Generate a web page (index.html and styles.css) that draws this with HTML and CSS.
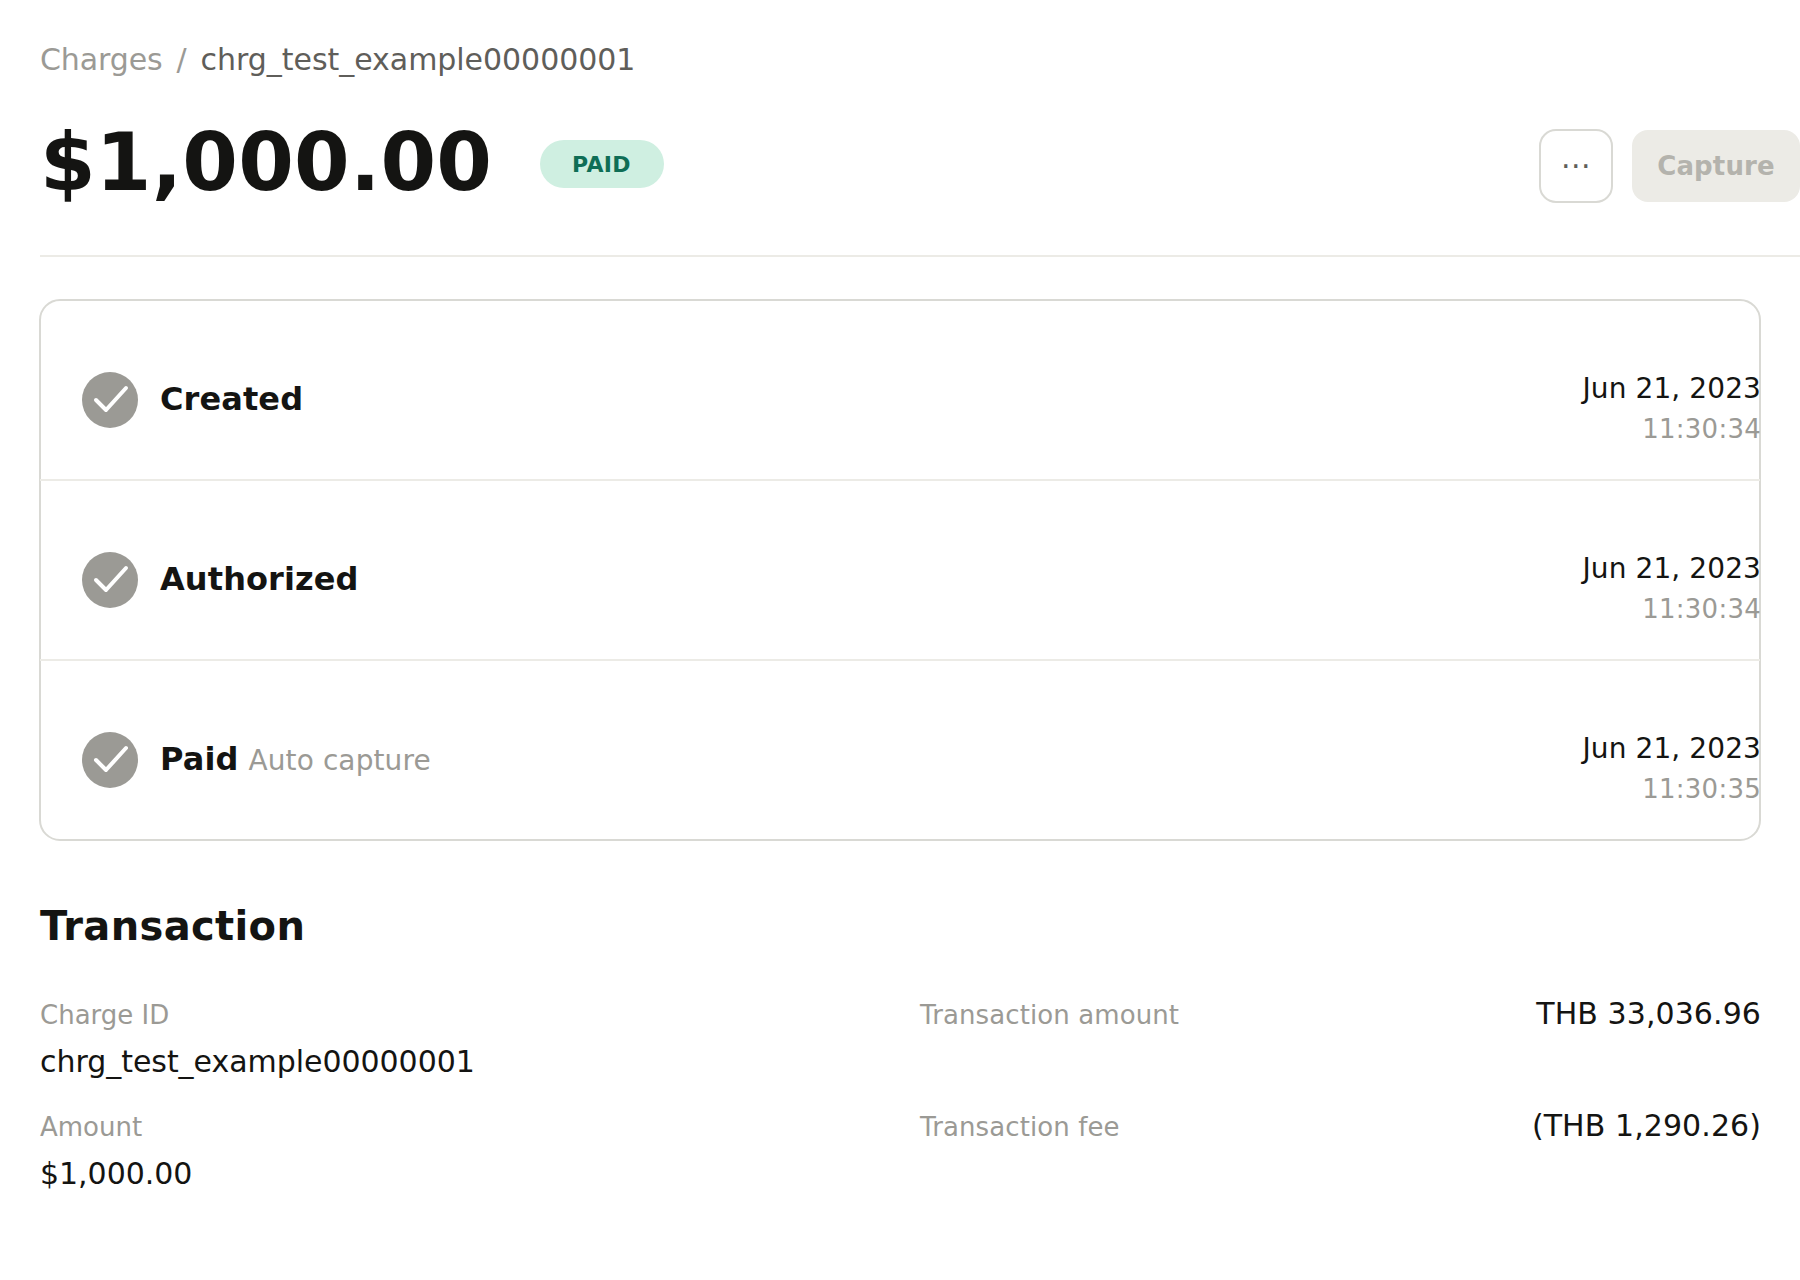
FILE: index.html
```
<!DOCTYPE html>
<html lang="en">
<head>
  <meta charset="UTF-8">
  <title>Charge</title>
  <link rel="stylesheet" href="styles.css">
</head>
<body>

<div class="page">
  <nav class="breadcrumb">
    <a class="crumb">Charges</a>
    <span class="crumb">/</span>
    <span class="crumb current">chrg_test_example00000001</span>
  </nav>

  <header class="header">
    <h1 class="amount">$1,000.00</h1>
    <span class="badge">PAID</span>
    <div class="actions">
      <button class="btn more">···</button>
      <button class="btn capture" disabled>Capture</button>
    </div>
  </header>

  <div class="timeline">
    <div class="event">
      <svg class="check" viewBox="0 0 56 56">
        <circle cx="28" cy="28" r="28"/>
        <path d="M14 28 L24 38 L44 16"/>
      </svg>
      <div class="event-name">Created</div>
      <div class="event-time">
        <div class="date">Jun 21, 2023</div>
        <div class="time">11:30:34</div>
      </div>
    </div>
    <div class="event">
      <svg class="check" viewBox="0 0 56 56">
        <circle cx="28" cy="28" r="28"/>
        <path d="M14 28 L24 38 L44 16"/>
      </svg>
      <div class="event-name">Authorized</div>
      <div class="event-time">
        <div class="date">Jun 21, 2023</div>
        <div class="time">11:30:34</div>
      </div>
    </div>
    <div class="event">
      <svg class="check" viewBox="0 0 56 56">
        <circle cx="28" cy="28" r="28"/>
        <path d="M14 28 L24 38 L44 16"/>
      </svg>
      <div class="event-name">Paid<span class="note">Auto capture</span></div>
      <div class="event-time">
        <div class="date">Jun 21, 2023</div>
        <div class="time">11:30:35</div>
      </div>
    </div>
  </div>

  <h2 class="section-title">Transaction</h2>
  <div class="details">
    <div class="fields">
      <div class="field">
        <div class="label">Charge ID</div>
        <div class="value">chrg_test_example00000001</div>
      </div>
      <div class="field">
        <div class="label">Amount</div>
        <div class="value">$1,000.00</div>
      </div>
    </div>
    <div class="totals">
      <div class="total">
        <span class="label">Transaction amount</span>
        <span class="value">THB 33,036.96</span>
      </div>
      <div class="total">
        <span class="label">Transaction fee</span>
        <span class="value">(THB 1,290.26)</span>
      </div>
    </div>
  </div>
</div>

</body>
</html>
```
FILE: styles.css
```
* {
  box-sizing: border-box;
}
body {
  margin: 0;
  font-family: 'DejaVu Sans', sans-serif;
  background-color: #fff;
  color: #141412;
  overflow: hidden;
}
.page {
  padding: 42px 0 0 40px;
}
.breadcrumb {
  display: flex;
  gap: 14px;
  font-size: 30px;
  line-height: 35px;
}
.crumb {
  color: #9b9a95;
  letter-spacing: -0.1px;
}
.crumb.current {
  color: #5f5e5a;
  letter-spacing: -0.04px;
}

.header {
  display: flex;
  align-items: flex-start;
  padding: 39px 0 46px;
  border-bottom: 2px solid #ecebe6;
}
.amount {
  width: 452px;
  margin: 0;
  font-size: 80px;
  line-height: 93px;
  font-weight: bold;
  letter-spacing: 0.2px;
}
.badge {
  width: 124px;
  height: 48px;
  margin: 24px 0 0 48px;
  padding: 12px 1px 0 0;
  border-radius: 24px;
  background-color: #cfefe1;
  color: #0f6e56;
  font-size: 22px;
  line-height: 25px;
  font-weight: bold;
  letter-spacing: 0.3px;
  text-align: center;
}
.actions {
  display: flex;
  align-items: center;
  gap: 19px;
  margin: 14px 0 0 auto;
}
.btn {
  padding: 0;
  font-family: inherit;
  border-radius: 16px;
}
.more {
  width: 74px;
  height: 74px;
  margin: -1px 0;
  border: 2px solid #d9d9d4;
  border-radius: 17px;
  background-color: #fff;
  color: #5f5e5a;
  font-size: 30px;
  line-height: 35px;
  letter-spacing: 0.4px;
}
.capture {
  width: 168px;
  height: 72px;
  border: none;
  background-color: #ecebe6;
  color: #b4b3ad;
  font-size: 26px;
  line-height: 30px;
  font-weight: bold;
  letter-spacing: 0.15px;
}

.timeline {
  width: 1722px;
  height: 542px;
  margin: 42px 0 0 -1px;
  border: 2px solid #d9d9d4;
  border-radius: 21px;
}
/* rows run halfway over the card border */
.event {
  display: flex;
  align-items: flex-start;
  height: 180px;
  margin: 0 -1px;
  padding: 71px 0 0 42px;
  border-bottom: 2px solid #ecebe6;
}
.event:last-child {
  height: 178px;
  border-bottom: none;
}
.check {
  width: 56px;
  height: 56px;
}
.check circle {
  fill: #9b9a95;
}
.check path {
  fill: none;
  stroke: #fff;
  stroke-width: 4;
  stroke-linecap: round;
  stroke-linejoin: round;
}
.event-name {
  margin: 8px 0 0 22px;
  font-size: 32px;
  line-height: 38px;
  font-weight: bold;
  letter-spacing: 0.1px;
}
.note {
  margin-left: 10px;
  font-size: 28px;
  font-weight: normal;
  color: #9b9a95;
}
.event-time {
  margin: 0 -1px 0 auto;
  text-align: right;
}
.date {
  font-size: 28px;
  line-height: 33px;
  letter-spacing: 0.1px;
}
.time {
  margin-top: 9px;
  font-size: 26px;
  line-height: 30px;
  letter-spacing: 0.25px;
  color: #9b9a95;
}

.section-title {
  margin: 62px 0 47px;
  font-size: 40px;
  line-height: 46px;
  letter-spacing: 0.35px;
}
.details {
  display: grid;
  grid-template-columns: 880px 841px;
}
.label {
  font-size: 26px;
  line-height: 30px;
  letter-spacing: 0.1px;
  color: #9b9a95;
}
.value {
  font-size: 30px;
  line-height: 35px;
}
.fields {
  display: grid;
  gap: 33px;
  padding-top: 4px;
}
.field .label {
  letter-spacing: 0;
}
.field .value {
  margin-top: 14px;
  letter-spacing: -0.04px;
}
.totals {
  display: flex;
  flex-direction: column;
  gap: 77px;
}
.total {
  display: flex;
  justify-content: space-between;
  align-items: baseline;
}
.total .value {
  letter-spacing: 0.08px;
}
```
